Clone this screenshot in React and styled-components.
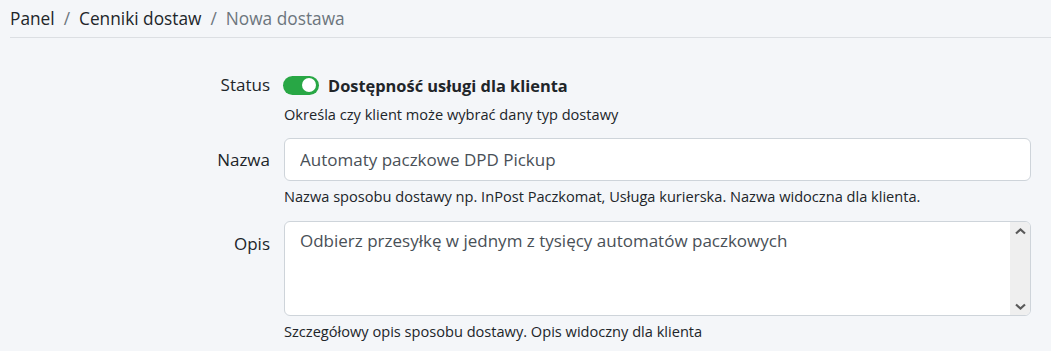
import React, { useState } from "react";
import styled, { createGlobalStyle } from "styled-components";

const GlobalStyle = createGlobalStyle`
  html, body {
    margin: 0;
    background: #f4f6f9;
    font-family: "Open Sans", "Noto Sans", sans-serif;
    color: #212529;
  }
`;

const Page = styled.div`
  padding: 0 0 0 10px;
`;

const Breadcrumb = styled.nav`
  display: flex;
  align-items: center;
  height: 38px;
  border-bottom: 1px solid #dcdfe3;
  font-size: 17.3px;
  box-sizing: border-box;
  padding-bottom: 1px;
`;

const Crumb = styled.span`
  color: ${(p) => (p.active ? "#6c757d" : "#212529")};
`;

const Sep = styled.span`
  color: #6c757d;
  padding: 0 9px;
`;

const Form = styled.div`
  padding: 36px 20px 0 0;
  display: flex;
  flex-direction: column;
`;

const Row = styled.div`
  display: grid;
  grid-template-columns: 260px 1fr;
  column-gap: 14px;
  margin-bottom: ${(p) => p.gap || 14}px;
`;

const Label = styled.label`
  text-align: right;
  font-size: 17px;
  padding-top: ${(p) => p.top || 0}px;
  line-height: 22px;
`;

const Field = styled.div`
  display: flex;
  flex-direction: column;
`;

const Help = styled.div`
  font-size: 14.6px;
  line-height: 20px;
  margin-top: ${(p) => p.top || 6}px;
`;

const SwitchRow = styled.div`
  display: flex;
  align-items: center;
  gap: 9px;
  height: 22px;
`;

const Switch = styled.button`
  width: 36px;
  height: 19px;
  border-radius: 10px;
  border: none;
  padding: 0;
  margin-left: -1px;
  background: ${(p) => (p.on ? "#28a745" : "#ced4da")};
  position: relative;
  cursor: pointer;
  &::after {
    content: "";
    position: absolute;
    top: 2.5px;
    left: ${(p) => (p.on ? "19px" : "3px")};
    width: 14px;
    height: 14px;
    border-radius: 50%;
    background: #fff;
  }
`;

const SwitchText = styled.span`
  font-weight: 700;
  font-size: 16.4px;
`;

const Input = styled.input`
  box-sizing: border-box;
  height: 43px;
  width: 100%;
  border: 1px solid #ced4da;
  border-radius: 6px;
  background: #fff;
  padding: 0 15px;
  font-family: inherit;
  font-size: 17px;
  color: #495057;
  outline: none;
`;

const AreaBox = styled.div`
  display: flex;
  box-sizing: border-box;
  height: 95px;
  border: 1px solid #ced4da;
  border-radius: 6px;
  background: #fff;
  overflow: hidden;
`;

const TextArea = styled.textarea`
  flex: 1;
  border: none;
  background: transparent;
  padding: 7px 15px;
  font-family: inherit;
  font-size: 17px;
  line-height: 24px;
  color: #495057;
  resize: none;
  overflow: hidden;
  outline: none;
`;

const ScrollTrack = styled.div`
  width: 20px;
  background: #efefef;
  display: flex;
  flex-direction: column;
  justify-content: space-between;
  align-items: center;
  padding: 6px 0 5px;
  box-sizing: border-box;
`;

const Arrow = ({ down }) => (
  <svg width="11" height="7" viewBox="0 0 11 7">
    <path
      d={down ? "M1 1.5 L5.5 5.5 L10 1.5" : "M1 5.5 L5.5 1.5 L10 5.5"}
      fill="none"
      stroke="#5a5a5a"
      strokeWidth="2.2"
    />
  </svg>
);

export default function App() {
  const [on, setOn] = useState(true);
  return (
    <Page>
      <GlobalStyle />
      <Breadcrumb>
        <Crumb>Panel</Crumb>
        <Sep>/</Sep>
        <Crumb>Cenniki dostaw</Crumb>
        <Sep>/</Sep>
        <Crumb active>Nowa dostawa</Crumb>
      </Breadcrumb>
      <Form>
        <Row gap={14}>
          <Label>Status</Label>
          <Field>
            <SwitchRow>
              <Switch on={on ? 1 : 0} onClick={() => setOn(!on)} />
              <SwitchText>Dostępność usługi dla klienta</SwitchText>
            </SwitchRow>
            <Help top={8}>Określa czy klient może wybrać dany typ dostawy</Help>
          </Field>
        </Row>
        <Row gap={15}>
          <Label top={11}>Nazwa</Label>
          <Field>
            <Input defaultValue="Automaty paczkowe DPD Pickup" />
            <Help top={5}>
              Nazwa sposobu dostawy np. InPost Paczkomat, Usługa kurierska. Nazwa widoczna dla klienta.
            </Help>
          </Field>
        </Row>
        <Row>
          <Label top={12}>Opis</Label>
          <Field>
            <AreaBox>
              <TextArea defaultValue="Odbierz przesyłkę w jednym z tysięcy automatów paczkowych" />
              <ScrollTrack>
                <Arrow />
                <Arrow down />
              </ScrollTrack>
            </AreaBox>
            <Help top={5}>Szczegółowy opis sposobu dostawy. Opis widoczny dla klienta</Help>
          </Field>
        </Row>
      </Form>
    </Page>
  );
}
